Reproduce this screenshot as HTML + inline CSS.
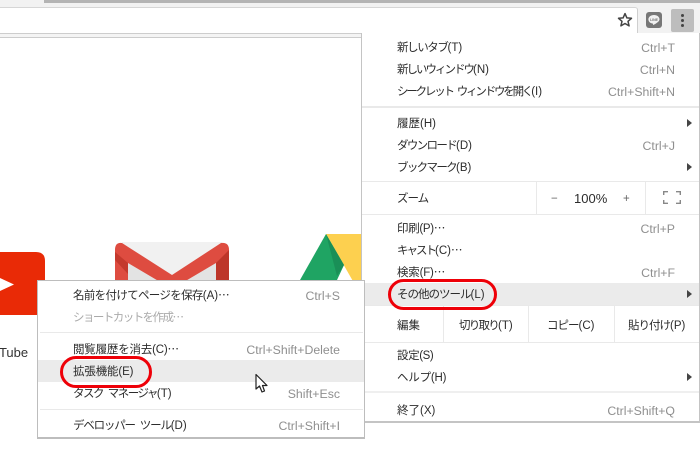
<!DOCTYPE html>
<html lang="ja"><head><meta charset="utf-8">
<style>
html,body{margin:0;padding:0;width:700px;height:476px;overflow:hidden;background:#fff}
body{position:relative;font-family:"Liberation Sans","Noto Sans CJK JP",sans-serif;font-size:11.5px;color:#2c2c2c}
div,span{position:absolute}
i{font-style:normal;letter-spacing:0}
i.e{font-family:"Noto Sans CJK JP",sans-serif;line-height:0}
.t{white-space:nowrap;line-height:16px;transform:translateY(-7px)}
.r{white-space:nowrap;line-height:16px;transform:translateY(-7px);color:#8f8f8f;text-align:right;font-size:12.3px}
.m{right:25px}
.sep{background:#e9e9e9;height:1px}
.arr{width:0;height:0;border-left:5px solid #444;border-top:4px solid transparent;border-bottom:4px solid transparent;left:687px}
.vs{background:#e9e9e9;width:1px}
</style></head><body>
<!-- chrome -->
<div style="left:0;top:0;width:44px;height:7px;background:#f2f2f2"></div>
<div style="left:0;top:3px;width:700px;height:31px;background:#f2f2f2"></div>
<div style="left:44px;top:0;width:656px;height:3px;background:#b4b4b4"></div>
<div style="left:0;top:7px;width:638px;height:26px;background:#fff;border-top:1px solid #d6d6d6;border-right:1px solid #cfcfcf;border-radius:0 3px 0 0;box-sizing:border-box"></div>
<div style="left:0;top:33px;width:700px;height:1px;background:#cdcdcd"></div>
<div style="left:0;top:34px;width:362px;height:3px;background:#f4f4f4"></div>
<div style="left:0;top:37px;width:362px;height:1px;background:#cccccc"></div>
<svg style="position:absolute;left:617px;top:12px" width="16" height="16" viewBox="0 0 16 16"><path d="M8 1.600l1.900 4.300 4.600.4-3.500 3 1.100 4.600L8 11.500l-4.100 2.400L5 9.300l-3.500-3 4.600-.4z" fill="#fff" stroke="#444" stroke-width="1.500" stroke-linejoin="round"/></svg>
<svg style="position:absolute;left:646px;top:12px" width="16" height="16" viewBox="0 0 16 16"><rect width="16" height="16" rx="3" fill="#777"/><path d="M8 3c-3.300 0-5.600 2-5.600 4.400 0 2.200 1.900 3.900 4.400 4.200.4.1.3.4.2 1.100 0 .3.2.3.5.2 1.300-.7 6-3 6-5.500C13.500 5 11.300 3 8 3z" fill="#f1f1f1"/><text x="8" y="9" font-size="3.500" text-anchor="middle" fill="#777" font-weight="bold" font-family="Liberation Sans">LINE</text></svg>
<div style="left:671px;top:9px;width:23px;height:23px;background:#bdbdbd;border-radius:2px"></div>
<div style="left:681px;top:14px;width:3px;height:3px;background:#444;border-radius:50%"></div>
<div style="left:681px;top:19px;width:3px;height:3px;background:#444;border-radius:50%"></div>
<div style="left:681px;top:24px;width:3px;height:3px;background:#444;border-radius:50%"></div>

<!-- page icons -->
<svg style="position:absolute;left:0;top:230px" width="365" height="90" viewBox="0 0 365 90">
<path d="M0 22H36Q45 22 45 31V76Q45 85 36 85H0Z" fill="#e92a06"/>
<path d="M0 48L14 54.500L0 61Z" fill="#fff"/>
<path d="M122 12H222V60H122Z" fill="#f1f1f1"/>
<path d="M128 33L172 59L216 33V60H128Z" fill="#e3e3e3"/>
<path d="M115 20Q115 12 122 13L172 45L221 13Q229 12 229 20V60H216V33L172 59L128 33V60H115Z" fill="#de4c40"/>
<path d="M216 33L229 20V60H216Z" fill="#bd3529"/>
<path d="M128 33L115 22V30L128 44Z" fill="#c4392d"/>
<path d="M326 4H361V60H358Z" fill="#fdd04f"/>
<path d="M326 4L300 50H337L344 35Z" fill="#1fa463"/>
<path d="M326 4L344 35L337 46Z" fill="#1a8f57"/>
</svg>
<div class="t" style="left:-23px;top:352px;font-size:13px;color:#333">YouTube</div>

<!-- main menu -->
<div style="left:361px;top:33px;width:339px;height:390px;background:#fff;border-left:1px solid #c4c4c4;border-right:1px solid #c4c4c4;border-bottom:2px solid #c4c4c4;box-sizing:border-box"></div>
<div style="left:362px;top:283px;width:337px;height:22px;background:#ebebeb"></div>
<div class="sep" style="left:362px;top:106px;width:337px;height:2px"></div>
<div class="sep" style="left:362px;top:181px;width:337px"></div>
<div class="sep" style="left:362px;top:214px;width:337px"></div>
<div class="sep" style="left:362px;top:305px;width:337px"></div>
<div class="sep" style="left:362px;top:342px;width:337px"></div>
<div class="sep" style="left:362px;top:391px;width:337px;height:2px;background:#efefef"></div>
<div class="vs" style="left:536px;top:182px;height:32px"></div>
<div class="vs" style="left:645px;top:182px;height:32px"></div>
<div class="vs" style="left:443px;top:306px;height:36px"></div>
<div class="vs" style="left:528px;top:306px;height:36px"></div>
<div class="vs" style="left:614px;top:306px;height:36px"></div>

<span class="t" style="left:397px;top:47px;letter-spacing:-1.4px">新しいタブ<i>(T)</i></span><span class="r m" style="top:47px">Ctrl+T</span>
<span class="t" style="left:397px;top:69px;letter-spacing:-2px">新しいウィンドウ<i>(N)</i></span><span class="r m" style="top:69px">Ctrl+N</span>
<span class="t" style="left:397px;top:91px;letter-spacing:-2.2px;word-spacing:3px">シークレット&nbsp;ウィンドウを開く<i>(I)</i></span><span class="r m" style="top:91px">Ctrl+Shift+N</span>
<span class="t" style="left:397px;top:123px">履歴(H)</span><div class="arr" style="top:119px"></div>
<span class="t" style="left:397px;top:145px;letter-spacing:-1.67px">ダウンロード<i>(D)</i></span><span class="r m" style="top:145px">Ctrl+J</span>
<span class="t" style="left:397px;top:167px;letter-spacing:-1.67px">ブックマーク<i>(B)</i></span><div class="arr" style="top:163px"></div>
<span class="t" style="left:397px;top:198px;letter-spacing:-1px">ズーム</span>
<span class="t" style="left:551px;top:198px;color:#666">−</span>
<span class="t" style="left:574px;top:198px;font-size:13px">100%</span>
<span class="t" style="left:623px;top:198px;color:#666">+</span>
<svg style="position:absolute;left:663px;top:191px" width="18" height="13" viewBox="0 0 18 13" fill="none" stroke="#888" stroke-width="1.400"><path d="M.7 4V.7H5M13 .7H17.300V4M.7 9V12.300H5M13 12.300H17.300V9"/></svg>
<span class="t" style="left:397px;top:228px;letter-spacing:-.3px">印刷(P)<i class="e">…</i></span><span class="r m" style="top:228px">Ctrl+P</span>
<span class="t" style="left:397px;top:250px;letter-spacing:-2px">キャスト<i>(C)</i><i class="e">…</i></span>
<span class="t" style="left:397px;top:272px;letter-spacing:-.2px">検索(F)<i class="e">…</i></span><span class="r m" style="top:272px">Ctrl+F</span>
<span class="t" style="left:397px;top:294px;letter-spacing:-1px">その他のツール<i>(L)</i></span><div class="arr" style="top:290px"></div>
<span class="t" style="left:397px;top:325px">編集</span>
<span class="t" style="left:459px;top:325px;letter-spacing:-1.75px">切り取り<i>(T)</i></span>
<span class="t" style="left:547px;top:325px;letter-spacing:-1px">コピー<i>(C)</i></span>
<span class="t" style="left:628px;top:325px;letter-spacing:-1px">貼り付け<i>(P)</i></span>
<span class="t" style="left:397px;top:355px;letter-spacing:-.4px">設定(S)</span>
<span class="t" style="left:397px;top:377px;letter-spacing:-.2px">ヘルプ(H)</span><div class="arr" style="top:373px"></div>
<span class="t" style="left:397px;top:410px">終了(X)</span><span class="r m" style="top:410px">Ctrl+Shift+Q</span>
<div style="left:388px;top:279px;width:109px;height:31px;box-sizing:border-box;border:3px solid #ee0008;border-radius:16px"></div>

<!-- submenu -->
<div style="left:37px;top:280px;width:328px;height:159px;background:#fff;border:1px solid #bdbdbd;border-bottom-width:2px;box-sizing:border-box"></div>
<div style="left:38px;top:360px;width:326px;height:22px;background:#ebebeb"></div>
<div class="sep" style="left:40px;top:332px;width:323px"></div>
<div class="sep" style="left:40px;top:409px;width:323px"></div>
<span class="t" style="left:73px;top:295px;letter-spacing:-.67px">名前を付けてページを保存<i>(A)</i><i class="e">…</i></span><span class="r" style="right:360px;top:295px">Ctrl+S</span>
<span class="t" style="left:73px;top:317px;color:#aaa;letter-spacing:-1.55px">ショートカットを作成<i class="e">…</i></span>
<span class="t" style="left:73px;top:349px;letter-spacing:-.2px">閲覧履歴を消去(C)<i class="e">…</i></span><span class="r" style="right:360px;top:349px">Ctrl+Shift+Delete</span>
<span class="t" style="left:73px;top:371px;letter-spacing:-.15px">拡張機能(E)</span>
<span class="t" style="left:73px;top:393px;letter-spacing:-1.5px;word-spacing:3px">タスク&nbsp;マネージャ<i>(T)</i></span><span class="r" style="right:360px;top:393px">Shift+Esc</span>
<span class="t" style="left:73px;top:425px;letter-spacing:-1.2px;word-spacing:3px">デベロッパー&nbsp;ツール<i>(D)</i></span><span class="r" style="right:360px;top:425px">Ctrl+Shift+I</span>
<div style="left:60px;top:356px;width:92px;height:32px;box-sizing:border-box;border:3px solid #ee0008;border-radius:16px"></div>
<svg style="position:absolute;left:254px;top:373px" width="15" height="21" viewBox="0 0 15 21"><path d="M2 1.500V16L5.500 13L8 19L10.500 18L8.500 12.500H13Z" fill="#fff" stroke="#222" stroke-width="1.200" stroke-linejoin="round"/></svg>
</body></html>
